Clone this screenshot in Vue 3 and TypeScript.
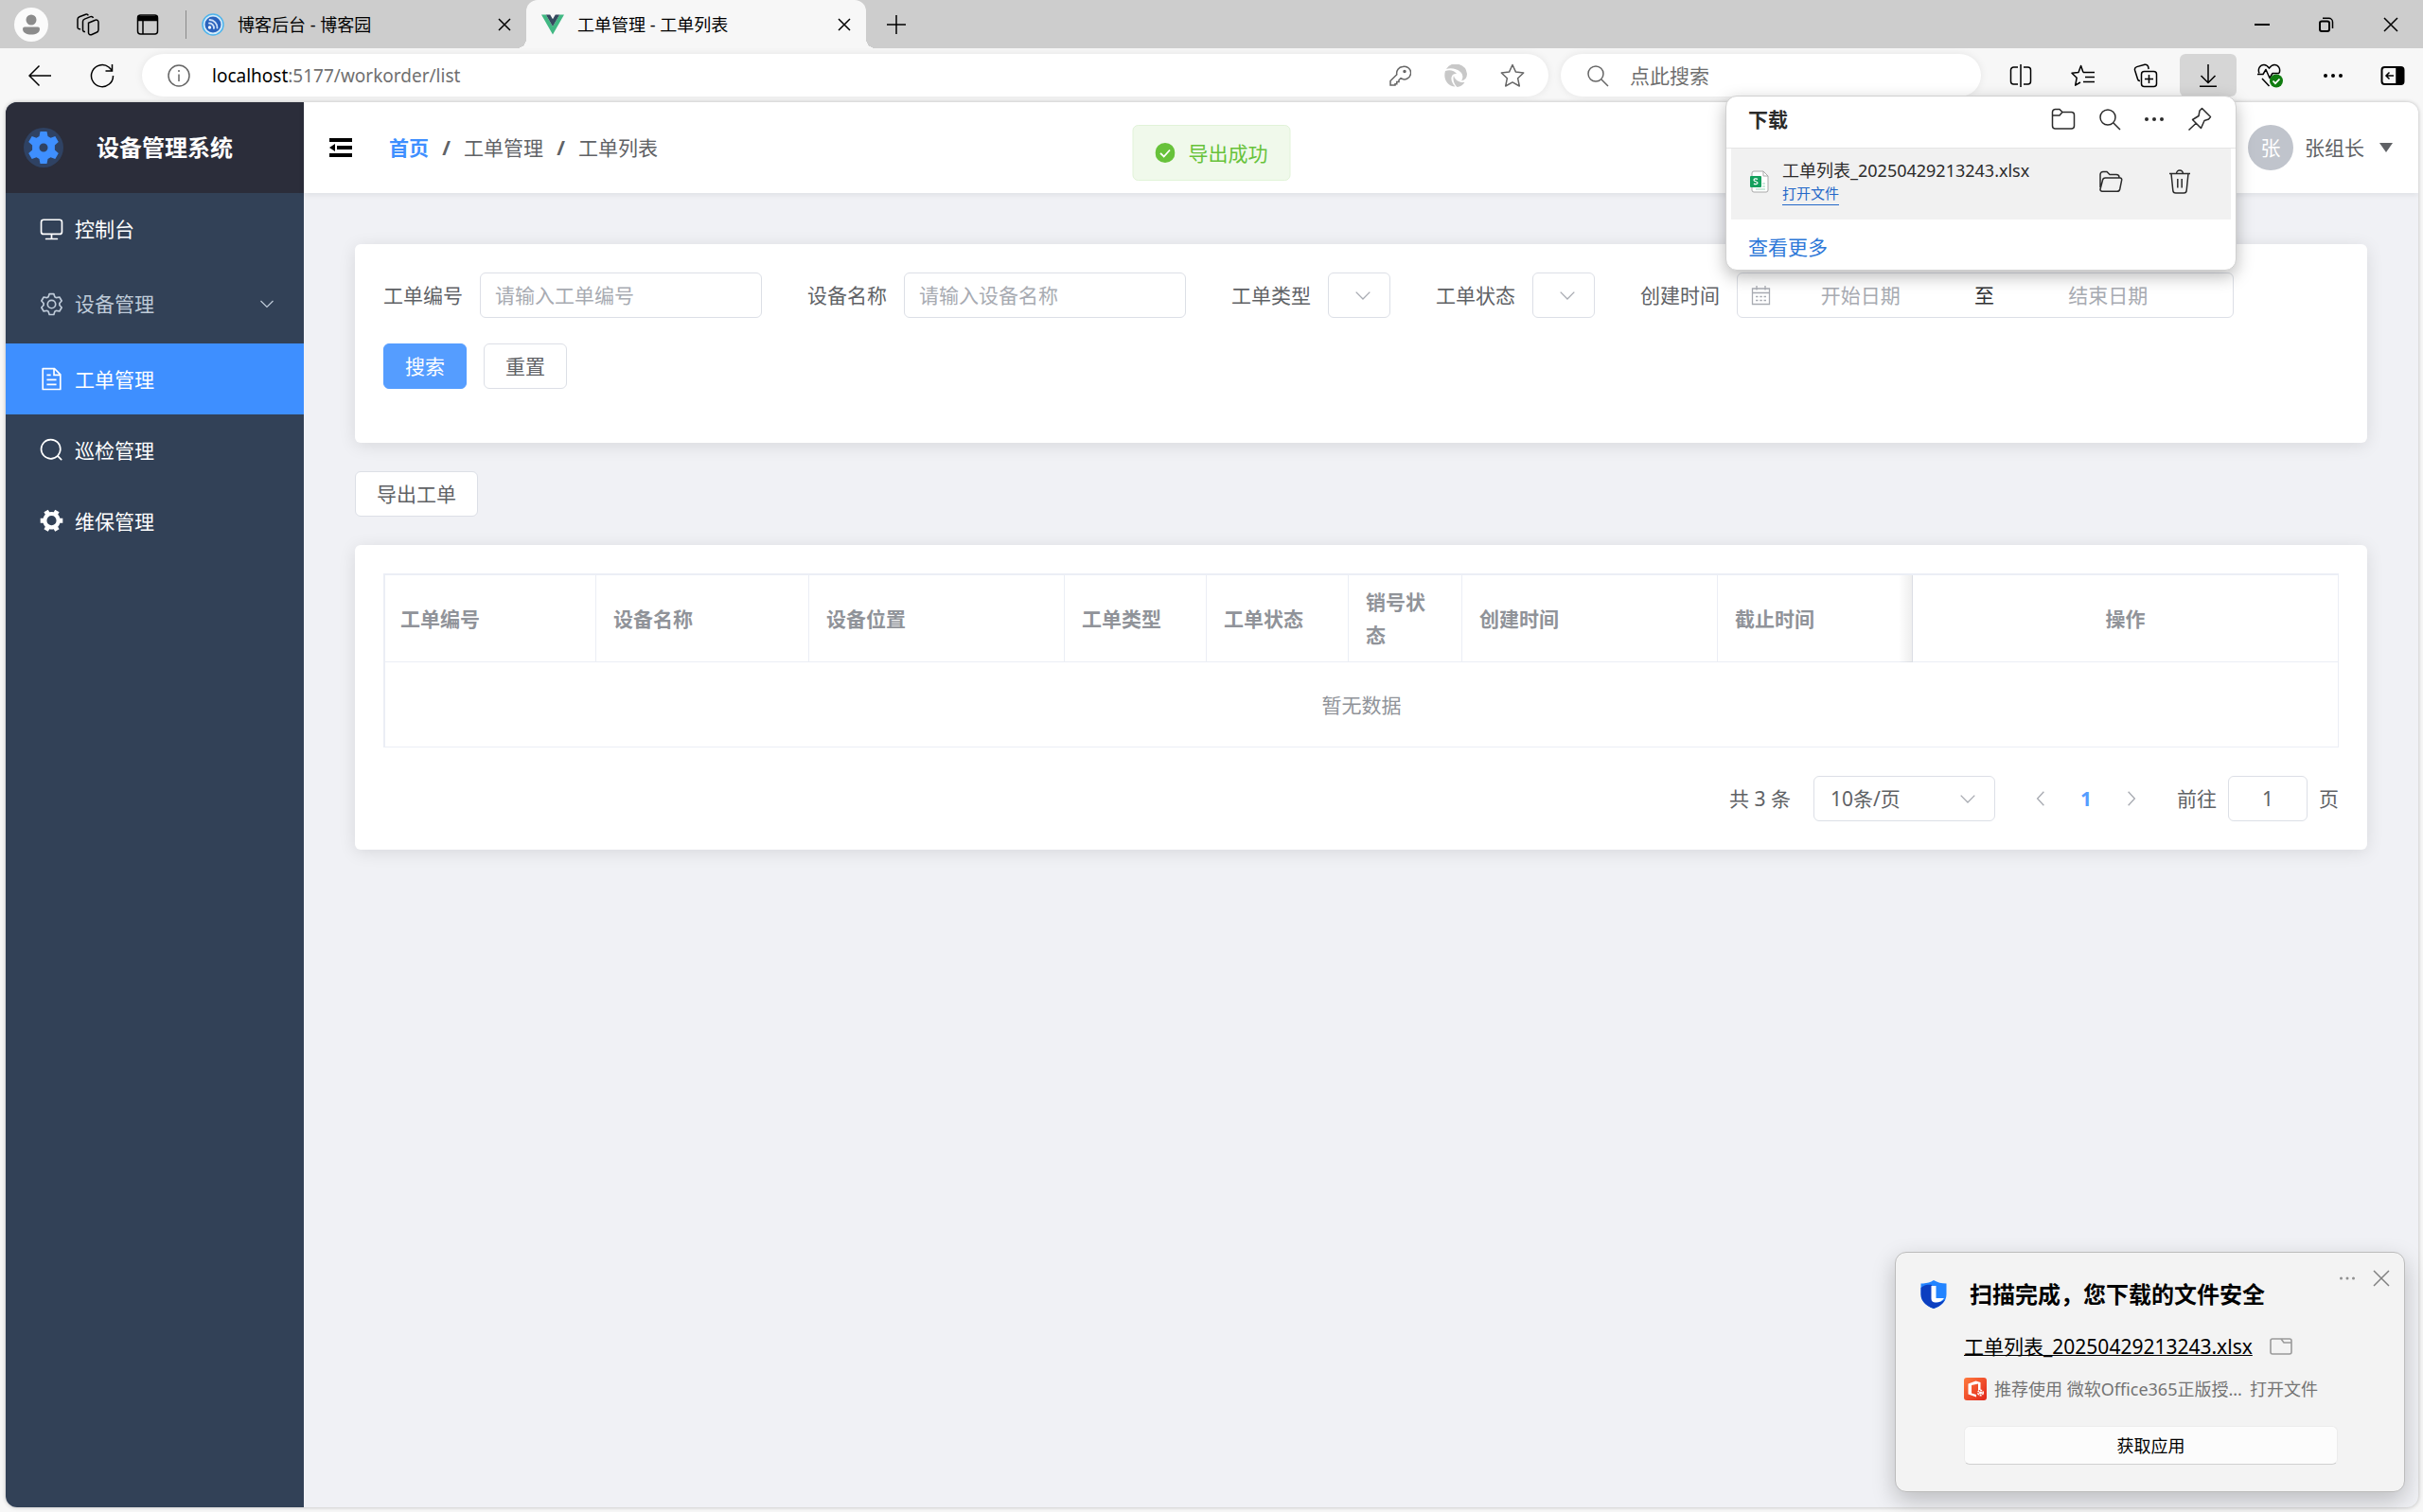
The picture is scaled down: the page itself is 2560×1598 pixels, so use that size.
<script setup lang="ts">
import { ref } from 'vue'

interface MenuItem {
  key: string
  label: string
  viewBox: string
  path: string
  children?: boolean
}

interface Column {
  label: string
  width?: number
  fixed?: boolean
}

const menu: MenuItem[] = [
  {
    key: 'dashboard',
    label: '控制台',
    viewBox: '0 0 1024 1024',
    path: 'M544 768v128h192a32 32 0 1 1 0 64H288a32 32 0 1 1 0-64h192V768H192A128 128 0 0 1 64 640V256a128 128 0 0 1 128-128h640a128 128 0 0 1 128 128v384a128 128 0 0 1-128 128zM192 192a64 64 0 0 0-64 64v384a64 64 0 0 0 64 64h640a64 64 0 0 0 64-64V256a64 64 0 0 0-64-64z',
  },
  {
    key: 'device',
    label: '设备管理',
    viewBox: '0 0 1024 1024',
    path: 'M600.704 64a32 32 0 0 1 30.464 22.208l35.2 109.376c14.784 7.232 28.928 15.36 42.432 24.512l112.384-24.192a32 32 0 0 1 34.432 15.36L944.32 364.8a32 32 0 0 1-4.032 37.504l-77.12 85.12a357.12 357.12 0 0 1 0 49.024l77.12 85.248a32 32 0 0 1 4.032 37.504l-88.704 153.6a32 32 0 0 1-34.432 15.296L708.8 803.904c-13.44 9.088-27.648 17.28-42.368 24.512l-35.264 109.376A32 32 0 0 1 600.704 960H423.296a32 32 0 0 1-30.464-22.208L357.696 828.48a351.616 351.616 0 0 1-42.56-24.64l-112.32 24.256a32 32 0 0 1-34.432-15.36L79.68 659.2a32 32 0 0 1 4.032-37.504l77.12-85.248a357.12 357.12 0 0 1 0-48.896l-77.12-85.248A32 32 0 0 1 79.68 364.8l88.704-153.6a32 32 0 0 1 34.432-15.296l112.32 24.256c13.568-9.152 27.776-17.408 42.56-24.64l35.2-109.312A32 32 0 0 1 423.232 64H600.64zm-23.424 64H446.72l-36.352 113.088-24.512 11.968a294.113 294.113 0 0 0-34.816 20.096l-22.656 15.36-116.224-25.088-65.28 113.152 79.68 88.192-1.92 27.136a293.12 293.12 0 0 0 0 40.192l1.92 27.136-79.808 88.192 65.344 113.152 116.224-25.024 22.656 15.296a294.113 294.113 0 0 0 34.816 20.096l24.512 11.968L446.72 896h130.688l36.48-113.152 24.448-11.904a288.282 288.282 0 0 0 34.752-20.096l22.592-15.296 116.288 25.024 65.28-113.152-79.744-88.192 1.92-27.136a293.12 293.12 0 0 0 0-40.256l-1.92-27.136 79.808-88.128-65.344-113.152-116.288 24.96-22.592-15.232a287.616 287.616 0 0 0-34.752-20.096l-24.448-11.904L577.344 128zM512 320a192 192 0 1 1 0 384 192 192 0 0 1 0-384zm0 64a128 128 0 1 0 0 256 128 128 0 0 0 0-256z',
    children: true,
  },
  {
    key: 'workorder',
    label: '工单管理',
    viewBox: '0 0 1024 1024',
    path: 'M832 384H576V128H192v768h640zm-26.496-64L640 154.496V320zM160 64h480l256 256v608a32 32 0 0 1-32 32H160a32 32 0 0 1-32-32V96a32 32 0 0 1 32-32m160 448h384v64H320zm0-192h160v64H320zm0 384h384v64H320z',
  },
  {
    key: 'inspection',
    label: '巡检管理',
    viewBox: '0 0 1024 1024',
    path: 'M795.904 750.72l124.992 124.928a32 32 0 0 1-45.248 45.248L750.656 795.904a416 416 0 1 1 45.248-45.248zM480 832a352 352 0 1 0 0-704 352 352 0 0 0 0 704z',
  },
  {
    key: 'maintain',
    label: '维保管理',
    viewBox: '0 0 1024 1024',
    path: 'M764.416 254.72a351.68 351.68 0 0 1 86.336 149.184H960v192.064H850.752a351.68 351.68 0 0 1-86.336 149.312l54.72 94.72-166.272 96-54.592-94.72a352.64 352.64 0 0 1-172.48 0L371.136 936l-166.272-96 54.72-94.72a351.68 351.68 0 0 1-86.336-149.312H64v-192h109.248a351.68 351.68 0 0 1 86.336-149.312L204.8 160l166.208-96h.192l54.656 94.592a352.64 352.64 0 0 1 172.48 0L652.8 64h.128L819.2 160l-54.72 94.72zM704 499.968a192 192 0 1 0-384 0 192 192 0 0 0 384 0z',
  },
]
const active = ref('workorder')

const columns: Column[] = [
  { label: '工单编号', width: 225 },
  { label: '设备名称', width: 225 },
  { label: '设备位置', width: 270 },
  { label: '工单类型', width: 150 },
  { label: '工单状态', width: 150 },
  { label: '销号状态', width: 120 },
  { label: '创建时间', width: 270 },
  { label: '截止时间' },
  { label: '操作', width: 450, fixed: true },
]

const orderNo = ref('')
const deviceName = ref('')
const orderType = ref('')
const orderStatus = ref('')
const startDate = ref('')
const endDate = ref('')
const pageSize = ref('10')
const jumpPage = ref('1')
const keyword = ref('')

function resetForm() {
  orderNo.value = ''
  deviceName.value = ''
  orderType.value = ''
  orderStatus.value = ''
  startDate.value = ''
  endDate.value = ''
}
</script>

<template>
  <div class="browser">
    <div class="tabstrip">
      <button class="profile" aria-label="个人资料">
        <svg width="36" height="36" viewBox="0 0 36 36"><circle cx="18" cy="18" r="18" fill="#fbfbfb" /><circle cx="18" cy="13" r="5.5" fill="#8c8c8c" /><path d="M11 20.5h14a2 2 0 0 1 2 2c0 4-4 6-9 6s-9-2-9-6a2 2 0 0 1 2-2z" fill="#8c8c8c" /></svg>
      </button>
      <button class="workspaces" aria-label="工作区">
        <svg class="line" width="26" height="26" viewBox="0 0 26 26"><path d="M13.5 11.2 20.600 8.300a2.400 2.400 0 0 1 3.400 2.200v8a3 3 0 0 1-2 2.800l-5.500 2.400a2.200 2.200 0 0 1-3-2z" /><path d="M10 20.500a2 2 0 0 1-2.500-2V9.800a3 3 0 0 1 1.900-2.700l6.200-2.500a2.300 2.300 0 0 1 2.900 1.400" /><path d="M5 17.500a2 2 0 0 1-3-1.900V7.500a3 3 0 0 1 1.900-2.700l6.600-2.600a2.300 2.300 0 0 1 2.800 1.200" /></svg>
      </button>
      <button class="tab-actions" aria-label="标签页操作">
        <svg class="line" width="24" height="24" viewBox="0 0 24 24"><rect x="1.500" y="2" width="21" height="20" rx="3" /><path d="M2 3.500h20v4H2z" fill="#000" /><path d="M7 8v14" /></svg>
      </button>
      <span class="strip-line"></span>
      <div class="tab">
        <svg width="24" height="24" viewBox="0 0 24 24"><circle cx="12" cy="12" r="11" fill="#d5ecfa" stroke="#4fb4ec" stroke-width="1.500" /><circle cx="12" cy="12" r="8.500" fill="#2a62bd" /><circle cx="8.500" cy="15" r="1.700" fill="#fff" /><path d="M8 10.500a5 5 0 0 1 5 5.500M8.500 7a8 8 0 0 1 8 8.500" fill="none" stroke="#cfe0f7" stroke-width="1.800" stroke-linecap="round" /></svg>
        <span class="tab-title">博客后台 - 博客园</span>
        <button aria-label="关闭标签页"><svg class="line" width="14" height="14" viewBox="0 0 14 14"><path d="m1 1 12 12M13 1 1 13" /></svg></button>
      </div>
      <div class="tab current">
        <svg width="24" height="24" viewBox="0 0 24 24"><path d="M0 1.500h4.800L12 14l7.200-12.500H24L12 22.500z" fill="#41b883" /><path d="M4.800 1.500h4.400L12 6.300l2.800-4.800h4.400L12 14z" fill="#35495e" /></svg>
        <span class="tab-title">工单管理 - 工单列表</span>
        <button aria-label="关闭标签页"><svg class="line" width="14" height="14" viewBox="0 0 14 14"><path d="m1 1 12 12M13 1 1 13" /></svg></button>
      </div>
      <button class="new-tab" aria-label="新建标签页"><svg class="line" width="22" height="22" viewBox="0 0 22 22"><path d="M11 1v20M1 11h20" /></svg></button>
      <div class="window-buttons">
        <button aria-label="最小化"><svg class="line" width="16" height="16" viewBox="0 0 16 16"><path d="M0 8h16" stroke-width="2" /></svg></button>
        <button aria-label="还原"><svg class="line" width="16" height="16" viewBox="0 0 16 16"><rect x="1" y="4.500" width="10" height="10.500" rx="2" stroke-width="2" /><path d="M4 1.300h6.500a4 4 0 0 1 4 4V12" /></svg></button>
        <button aria-label="关闭"><svg class="line" width="16" height="16" viewBox="0 0 16 16"><path d="m1 1 14 14M15 1 1 15" /></svg></button>
      </div>
    </div>

    <div class="toolbar">
      <button class="nav" aria-label="后退"><svg class="line" width="24" height="24" viewBox="0 0 24 24"><path d="M24 12H1M11.500 1.500 1 12l10.500 10.500" /></svg></button>
      <button class="nav" aria-label="刷新"><svg class="line" width="26" height="26" viewBox="0 0 26 26"><path d="M24.500 13A11.500 11.500 0 1 1 20 4l3 3M23.500 1v7h-7" /></svg></button>
      <div class="address">
        <svg class="line grey" width="24" height="24" viewBox="0 0 24 24"><circle cx="12" cy="12" r="11" /><path d="M12 10.500V18M12 6v2" /></svg>
        <span class="url">localhost<span>:5177/workorder/list</span></span>
        <svg class="line grey" width="24" height="24" viewBox="0 0 24 24"><path d="M15 2.500a6.800 6.800 0 1 1-2 12.200L11 16.500v2H8.800v2.200H7V22H2v-4.500l6.800-6.800A6.800 6.800 0 0 1 15 2.500z" /><circle cx="17" cy="7.500" r="1" fill="#666" /></svg>
        <svg width="24" height="24" viewBox="0 0 24 24" fill="#c8c8c8"><path d="M2 5a12 12 0 0 1 22 5c0 4-2 6.500-6 7.500 2-3 2-6.500-1-9.500C13 4.500 7 3.500 2 5z" /><path d="M1 7c5-2 10 0 12 3-3-.5-5 1-5.500 4-.5 3 1 6 4 9.500C3 23-1.500 15 1 7z" /><path d="M10 12c1 4 5 7.500 11.500 7-2 3-4.500 4.500-8 5-3-3-5-8-3.500-12z" /></svg>
        <svg class="line grey" width="26" height="26" viewBox="0 0 26 26"><path d="m13 1.500 3.500 7.600 8.200.9-6.100 5.700 1.700 8.300L13 19.900 5.700 24l1.700-8.300L1.300 10l8.200-.9z" stroke-linejoin="round" /></svg>
      </div>
      <label class="web-search">
        <svg class="line grey" width="24" height="24" viewBox="0 0 24 24"><circle cx="10" cy="10" r="8" /><path d="m16 16 7 7" /></svg>
        <input v-model="keyword" type="text" aria-label="搜索" placeholder="点此搜索" />
      </label>
      <div class="tools">
        <button aria-label="分屏"><svg class="line" width="24" height="24" viewBox="0 0 24 24"><path d="M9 3H4.500A3 3 0 0 0 1.500 6v12a3 3 0 0 0 3 3H9M15 3h4.500a3 3 0 0 1 3 3v12a3 3 0 0 1-3 3H15M12 0v24" /></svg></button>
        <button aria-label="收藏夹"><svg class="line" width="26" height="24" viewBox="0 0 26 24"><path d="M13 8.500 10.600 1.500 8 8.500l-7 .7 5.200 5-1.500 8L10 19M13 8.500h12M15 13.500h10M13 18.500h12" stroke-linejoin="round" /></svg></button>
        <button aria-label="集锦"><svg class="line" width="26" height="26" viewBox="0 0 26 26"><path d="M7 18.500a2.500 2.500 0 0 1-2.500-2L1.600 7.200a3 3 0 0 1 2-3.600L12 1.300a3 3 0 0 1 3.600 2L16.200 6" /><rect x="8.500" y="8.500" width="16" height="16" rx="3" /><path d="M16.500 12v9M12 16.500h9" /></svg></button>
        <button class="pressed" aria-label="下载"><svg class="line" width="24" height="24" viewBox="0 0 24 24"><path d="M12 0v19M4.500 12l7.500 7.500 7.500-7.500M3 23.200h18" /></svg></button>
        <button aria-label="浏览器概要"><svg width="28" height="26" viewBox="0 0 28 26"><g class="line"><path d="M2 10.500C0 5.500 3 1.500 7 1.500c2.500 0 4 1.500 5.500 3.500 1.500-2 3-3.500 5.500-3.500 4 0 7 4 5 9M5 16l7.500 8" /><path d="M0 11.500h6l3-5 4 9 3-5h7" stroke-linejoin="round" /></g><circle cx="20" cy="18.500" r="7" fill="#107c10" /><path d="m16.500 18.500 2.500 2.700 4.500-4.700" fill="none" stroke="#fff" stroke-width="1.800" /></svg></button>
        <button aria-label="更多"><svg width="22" height="6" viewBox="0 0 22 6"><circle cx="3" cy="3" r="2" /><circle cx="11" cy="3" r="2" /><circle cx="19" cy="3" r="2" /></svg></button>
        <button class="narrow" aria-label="侧栏"><svg class="line" width="26" height="22" viewBox="0 0 26 22"><rect x="1.500" y="2" width="23" height="18" rx="3" stroke-width="2" /><path d="M17 2.500h5a2 2 0 0 1 2 2v13a2 2 0 0 1-2 2h-5z" fill="#000" /><path d="M14 11H6M9.500 7.500 6 11l3.500 3.500" /></svg></button>
      </div>
    </div>

    <div class="app">
      <aside class="sidebar">
        <div class="brand">
          <span class="brand-mark"><svg width="32" height="36" viewBox="0 0 32 36"><path fill="#3e8fff" fill-rule="evenodd" d="M12.500 1h7l1 5 3 1.800 4.800-1.700 3.500 6-3.900 3.500v4.800l3.900 3.500-3.500 6-4.800-1.700-3 1.800-1 5h-7l-1-5-3-1.800-4.800 1.700-3.500-6 3.900-3.500v-4.800L.2 12.100l3.500-6 4.800 1.700 3-1.800zM16 13.500a4.500 4.500 0 1 0 0 9 4.500 4.500 0 0 0 0-9z" /></svg></span>
          <h1>设备管理系统</h1>
        </div>
        <nav>
          <a
            v-for="item in menu"
            :key="item.key"
            href="#"
            :class="['menu-item', { active: active === item.key, parent: item.children }]"
            @click.prevent="active = item.key"
          >
            <svg width="27" height="27" :viewBox="item.viewBox" fill="currentColor"><path :d="item.path" /></svg>
            <span>{{ item.label }}</span>
            <svg v-if="item.children" class="arrow" width="16" height="16" viewBox="0 0 16 16"><path d="m1.500 5 6.500 6.500L14.500 5" /></svg>
          </a>
        </nav>
      </aside>

      <div class="content">
        <header class="topbar">
          <button class="fold" aria-label="收起菜单"><svg width="24" height="20" viewBox="0 0 24 20"><path d="M0 0h24v4H0zM8 8h16v4H8zM0 16h24v4H0zM0 10l6-4v8z" /></svg></button>
          <nav class="crumbs">
            <a href="#">首页</a><i>/</i><span>工单管理</span><i>/</i><span>工单列表</span>
          </nav>
          <button class="user">
            <span class="avatar">张</span>
            <span>张组长</span>
            <svg width="14" height="10" viewBox="0 0 14 10"><path d="M0 0h14L7 10z" fill="#606266" /></svg>
          </button>
        </header>

        <main>
          <form class="card filters" @submit.prevent>
            <div class="field">
              <label for="orderNo">工单编号</label>
              <input id="orderNo" v-model="orderNo" class="box text" type="text" placeholder="请输入工单编号" />
            </div>
            <div class="field">
              <label for="deviceName">设备名称</label>
              <input id="deviceName" v-model="deviceName" class="box text" type="text" placeholder="请输入设备名称" />
            </div>
            <div class="field">
              <label for="orderType">工单类型</label>
              <div class="select short">
                <select id="orderType" v-model="orderType" class="box"><option value=""></option></select>
                <svg class="arrow" width="18" height="18" viewBox="0 0 16 16"><path d="m1.500 5 6.500 6.500L14.500 5" /></svg>
              </div>
            </div>
            <div class="field">
              <label for="orderStatus">工单状态</label>
              <div class="select short">
                <select id="orderStatus" v-model="orderStatus" class="box"><option value=""></option></select>
                <svg class="arrow" width="18" height="18" viewBox="0 0 16 16"><path d="m1.500 5 6.500 6.500L14.500 5" /></svg>
              </div>
            </div>
            <div class="field">
              <label for="startDate">创建时间</label>
              <div class="box range">
                <svg width="21" height="21" viewBox="0 0 21 21" fill="none" stroke="#a8abb2" stroke-width="1.300"><path d="M1.500 3h18v16.500h-18zM1.500 7.500h18M6 0v4.500M15 0v4.500" /><path d="M5 11.500h2.500M9.300 11.500h2.500M13.500 11.500H16M5 15.500h2.500M9.300 15.500h2.500M13.500 15.500H16" /></svg>
                <input id="startDate" v-model="startDate" type="text" placeholder="开始日期" />
                <span>至</span>
                <input v-model="endDate" type="text" aria-label="结束日期" placeholder="结束日期" />
              </div>
            </div>
            <div class="actions">
              <button class="btn primary" type="submit">搜索</button>
              <button class="btn" type="button" @click="resetForm">重置</button>
            </div>
          </form>

          <button class="btn export" type="button">导出工单</button>

          <section class="card">
            <table>
              <colgroup>
                <col v-for="col in columns" :key="col.label" :style="col.width ? { width: col.width + 'px' } : undefined" />
              </colgroup>
              <thead>
                <tr>
                  <th v-for="col in columns" :key="col.label" :class="{ fixed: col.fixed }">{{ col.label }}</th>
                </tr>
              </thead>
              <tbody>
                <tr><td :colspan="columns.length">暂无数据</td></tr>
              </tbody>
            </table>
            <div class="pager">
              <span class="total">共 3 条</span>
              <div class="select size">
                <select v-model="pageSize" class="box" aria-label="每页条数"><option value="10">10条/页</option></select>
                <svg class="arrow" width="18" height="18" viewBox="0 0 16 16"><path d="m1.500 5 6.500 6.500L14.500 5" /></svg>
              </div>
              <div class="pages">
                <button type="button" aria-label="上一页"><svg class="arrow" width="18" height="18" viewBox="0 0 16 16"><path d="M11 1.500 5 8l6 6.500" /></svg></button>
                <button type="button" class="on">1</button>
                <button type="button" aria-label="下一页"><svg class="arrow" width="18" height="18" viewBox="0 0 16 16"><path d="m5 1.500 6 6.500-6 6.500" /></svg></button>
              </div>
              <label class="jump">前往<input v-model="jumpPage" class="box" type="text" />页</label>
            </div>
          </section>
        </main>
      </div>
    </div>

    <div class="message" role="status">
      <svg width="21" height="21" viewBox="0 0 21 21"><circle cx="10.500" cy="10.500" r="10.500" fill="#67c23a" /><path d="m5.500 10.800 3.700 3.700 6.300-7" fill="none" stroke="#fff" stroke-width="1.800" /></svg>
      导出成功
    </div>

    <section class="downloads">
      <header>
        <h2>下载</h2>
        <button aria-label="打开下载文件夹"><svg class="line dark" width="26" height="24" viewBox="0 0 26 24"><path d="M1.500 4.500a3 3 0 0 1 3-3H9l3 3h9.500a3 3 0 0 1 3 3V19a3 3 0 0 1-3 3h-17a3 3 0 0 1-3-3zM1.500 8H9l3-3.500" /></svg></button>
        <button aria-label="搜索下载"><svg class="line dark" width="24" height="24" viewBox="0 0 24 24"><circle cx="10" cy="10" r="8" /><path d="m16 16 7 7" /></svg></button>
        <button aria-label="更多选项"><svg width="22" height="6" viewBox="0 0 22 6" fill="#2b2b2b"><circle cx="3" cy="3" r="2" /><circle cx="11" cy="3" r="2" /><circle cx="19" cy="3" r="2" /></svg></button>
        <button aria-label="固定"><svg class="line dark" width="26" height="26" viewBox="0 0 26 26"><path d="m15.500 1.500 9 9-2 2.500-4.500 1.500-3.500 8-9-9L12 9.500l1-5.500zM9.500 17 1.500 24.500" stroke-linejoin="round" /></svg></button>
      </header>
      <div class="file">
        <svg width="20" height="24" viewBox="0 0 20 24"><path d="M4 1h10l5 5v15a2 2 0 0 1-2 2H4a2 2 0 0 1-2-2V3a2 2 0 0 1 2-2z" fill="#fff" stroke="#a9a9a9" /><path d="M14 1v5h5" fill="none" stroke="#a9a9a9" /><path d="M13 14h3M13 17h3M6 20h10" stroke="#cdeadd" stroke-width="2" /><rect y="6" width="12" height="12" rx="1" fill="#12a05c" /><path d="M8 9.500c-1-.9-4-.9-4 .8 0 1.800 4 1.200 4 3 0 1.700-3 1.700-4 .7" fill="none" stroke="#fff" stroke-width="1.200" /></svg>
        <div class="file-text">
          <span>工单列表_20250429213243.xlsx</span>
          <a href="#">打开文件</a>
        </div>
        <button aria-label="在文件夹中显示"><svg class="line dark" width="26" height="24" viewBox="0 0 26 24"><path d="M2 18V4.500a3 3 0 0 1 3-3h4l3 3h7a3 3 0 0 1 3 3V8M7.500 8H23a1.800 1.800 0 0 1 1.700 2.200l-2 9.800a3 3 0 0 1-3 2.300H4a2 2 0 0 1-2-2.300L4.500 10.500A3 3 0 0 1 7.500 8z" /></svg></button>
        <button aria-label="删除文件"><svg class="line dark" width="24" height="26" viewBox="0 0 24 26"><path d="M1 4.500h22M8.500 4.500a3.500 3.500 0 0 1 7 0M3 4.500l1.800 17.700A3 3 0 0 0 7.800 25h8.400a3 3 0 0 0 3-2.800L21 4.500M9.800 10v9.500M14.200 10v9.500" /></svg></button>
      </div>
      <a class="more" href="#">查看更多</a>
    </section>

    <section class="toast">
      <div class="toast-top">
        <svg width="28" height="30" viewBox="0 0 28 30"><path d="M14 0c4 2.500 8 3.500 13.500 3.500V15c0 7.500-6 12.500-13.500 15C6.500 27.500.5 22.500.5 15V3.500C6 3.500 10 2.500 14 0z" fill="#2284ff" /><path d="M.5 8C4 5 8 4.500 12 5v15c0 2 2 3.500 5 3.500 3.500 0 6-1 9-3-2.500 5-7 8-12 9.500C6.500 27.500.5 22.500.5 15z" fill="#0c3fc0" /><path d="M11.500 6h5v13h8.500c-2 3-5 4.500-9 4.500-3 0-4.500-1.500-4.500-4z" fill="#fff" /></svg>
        <h2>扫描完成，您下载的文件安全</h2>
        <div class="toast-buttons">
          <button aria-label="更多"><svg width="18" height="6" viewBox="0 0 18 6" fill="#909090"><circle cx="2.500" cy="3" r="1.500" /><circle cx="9" cy="3" r="1.500" /><circle cx="15.500" cy="3" r="1.500" /></svg></button>
          <button aria-label="关闭"><svg class="line" width="18" height="18" viewBox="0 0 18 18"><path d="m1 1 16 16M17 1 1 17" stroke="#808080" /></svg></button>
        </div>
      </div>
      <div class="toast-file">
        <a href="#">工单列表_20250429213243.xlsx</a>
        <svg width="24" height="18" viewBox="0 0 24 18" fill="none" stroke="#9a9a9a" stroke-width="1.600"><path d="M1 3a2 2 0 0 1 2-2h18a2 2 0 0 1 2 2v12a2 2 0 0 1-2 2H3a2 2 0 0 1-2-2zM12 1l3 4h8" /></svg>
      </div>
      <div class="toast-tip">
        <svg width="24" height="24" viewBox="0 0 24 24"><defs><linearGradient id="tipFill" x1="0" y1="0" x2="1" y2="1"><stop offset="0" stop-color="#ff7a3d" /><stop offset="1" stop-color="#e1251b" /></linearGradient></defs><rect width="24" height="24" rx="3" fill="url(#tipFill)" /><path d="m12.500 3.500 5 1.500v8h-2.500V6.500L8 8v8.500l5 1.500v2.500l-8.500-3V6.500z" fill="#fff" /><circle cx="17.500" cy="16" r="2.700" fill="none" stroke="#fff" stroke-width="1.600" stroke-dasharray="2 1" /><circle cx="17.500" cy="16" r="1.600" fill="#fff" /></svg>
        <span>推荐使用 微软Office365正版授...</span>
        <a href="#">打开文件</a>
      </div>
      <button class="get-app">获取应用</button>
    </section>
  </div>
</template>

<style>
body {
  margin: 0;
  background: #f7f7f7;
}
</style>

<style scoped>
.browser,
.browser * {
  box-sizing: border-box;
}
.browser {
  position: relative;
  display: flex;
  flex-direction: column;
  min-height: 100vh;
  padding-bottom: 5px;
  background: #f7f7f7;
  color: #606266;
  font-family: "Noto Sans", "Noto Sans CJK SC", sans-serif;
  font-size: 21px;
  line-height: 30px;
}
button {
  display: flex;
  align-items: center;
  justify-content: center;
  padding: 0;
  border: 0;
  background: none;
  color: inherit;
  font: inherit;
  cursor: pointer;
}
input,
select {
  min-width: 0;
  padding: 0;
  border: 0;
  outline: 0;
  background: none;
  color: inherit;
  font: inherit;
}
input::placeholder {
  color: #a8abb2;
  opacity: 1;
}
a {
  color: inherit;
  text-decoration: none;
}
h1,
h2 {
  margin: 0;
}
svg {
  flex: none;
  display: block;
}
.line {
  fill: none;
  stroke: #000;
  stroke-width: 1.5;
}
.grey {
  stroke: #666;
}
.dark {
  stroke: #2b2b2b;
}
.arrow {
  fill: none;
  stroke: #a8abb2;
  stroke-width: 1.2;
}

/* tab strip */
.tabstrip {
  display: flex;
  align-items: center;
  height: 51px;
  padding-left: 15px;
  background: #cdcdcd;
  color: #000;
  font-size: 18px;
}
.workspaces {
  margin-left: 29px;
}
.tab-actions {
  margin: 0 28px 0 38px;
}
.strip-line {
  width: 1px;
  height: 30px;
  background: #8a8a8a;
}
.tab {
  position: relative;
  display: flex;
  align-items: center;
  gap: 14px;
  width: 359px;
  height: 51px;
  padding: 0 16px;
}
.tab-title {
  flex: 1;
}
.tab.current {
  border-radius: 12px 12px 0 0;
  background: #f7f7f7;
}
.tab.current::before,
.tab.current::after {
  content: "";
  position: absolute;
  bottom: 0;
  width: 10px;
  height: 10px;
}
.tab.current::before {
  left: -10px;
  background: radial-gradient(circle at 0 0, #cdcdcd 10px, #f7f7f7 10px);
}
.tab.current::after {
  right: -10px;
  background: radial-gradient(circle at 100% 0, #cdcdcd 10px, #f7f7f7 10px);
}
.new-tab {
  margin-left: 21px;
}
.window-buttons {
  display: flex;
  gap: 52px;
  margin-left: auto;
  padding-right: 26px;
}

/* toolbar */
.toolbar {
  display: flex;
  align-items: center;
  height: 57px;
  padding: 0 6px 0 30px;
}
.nav {
  width: 24px;
  margin-right: 42px;
}
.nav + .nav {
  margin-right: 30px;
}
.address,
.web-search {
  display: flex;
  align-items: center;
  height: 45px;
  border-radius: 23px;
  background: #fff;
  box-shadow: 0 0 9px rgba(0, 0, 0, 0.08);
}
.address {
  flex: 1;
  gap: 35px;
  padding: 0 25px 0 27px;
}
.url {
  flex: 1;
  margin-left: -12px;
  color: #000;
  font-size: 19px;
}
.url span {
  color: #707070;
}
.web-search {
  width: 444px;
  margin-left: 13px;
  padding: 0 27px;
  gap: 22px;
}
.web-search input {
  flex: 1;
}
.web-search input::placeholder {
  color: #6f6f6f;
}
.tools {
  display: flex;
  gap: 6px;
  margin-left: 12px;
}
.tools button {
  width: 60px;
  height: 45px;
  border-radius: 6px;
}
.tools .narrow {
  width: 53px;
}
.tools .pressed {
  background: #d6d6d6;
}

/* application shell */
.app {
  flex: 1;
  display: flex;
  margin: 0 5px 0 6px;
  overflow: hidden;
  border-radius: 12px;
  background: #f0f1f5;
  box-shadow: 0 0 4px rgba(0, 0, 0, 0.25);
}
.sidebar {
  width: 315px;
  background: #324157;
  color: #fff;
}
.brand {
  display: flex;
  align-items: center;
  gap: 35px;
  height: 96px;
  padding-left: 19px;
  background: #2b2d3a;
}
.brand-mark {
  display: flex;
  align-items: center;
  justify-content: center;
  width: 42px;
  height: 42px;
  border-radius: 50%;
  background: #2f4263;
}
.brand h1 {
  font-size: 24px;
}
.menu-item {
  display: flex;
  align-items: center;
  gap: 11px;
  height: 75px;
  padding: 0 31px 0 35px;
}
.menu-item.active {
  background: #3e8fff;
}
.menu-item.parent {
  height: 84px;
  color: #bfcbd9;
}
.menu-item .arrow {
  margin-left: auto;
  stroke: #bfcbd9;
}
.content {
  flex: 1;
  min-width: 0;
}
.topbar {
  display: flex;
  align-items: center;
  height: 96px;
  padding: 0 27px;
  background: #fff;
  box-shadow: 0 2px 6px rgba(0, 21, 41, 0.08);
}
.crumbs {
  display: flex;
  margin-left: 39px;
}
.crumbs a {
  color: #3e8fff;
  font-weight: 700;
}
.crumbs i {
  width: 37px;
  font-style: normal;
  font-weight: 700;
  text-align: center;
}
.user {
  gap: 12px;
  margin-left: auto;
}
.user svg {
  margin-left: 4px;
}
.avatar {
  display: flex;
  align-items: center;
  justify-content: center;
  width: 48px;
  height: 48px;
  border-radius: 50%;
  background: #c0c4cc;
  color: #fff;
}
main {
  padding: 54px;
}
.card {
  padding: 30px;
  border-radius: 6px;
  background: #fff;
  box-shadow: 0 3px 18px rgba(0, 0, 0, 0.1);
}

/* filters */
.filters {
  display: flex;
  flex-wrap: wrap;
  gap: 27px 48px;
  padding-bottom: 57px;
}
.field {
  display: flex;
  align-items: center;
  gap: 18px;
}
.box {
  height: 48px;
  border: 1px solid #dcdfe6;
  border-radius: 6px;
  background: #fff;
}
.text {
  width: 298px;
  padding: 0 15px;
}
.select {
  display: grid;
}
.select > * {
  grid-area: 1 / 1;
}
.select select {
  width: 100%;
  padding: 0 17px;
  appearance: none;
}
.select .arrow {
  align-self: center;
  justify-self: end;
  margin-right: 20px;
  pointer-events: none;
}
.short {
  width: 66px;
}
.size {
  width: 192px;
}
.range {
  display: flex;
  align-items: center;
  width: 525px;
  padding: 0 37px 0 14px;
}
.range input {
  flex: 1;
  text-align: center;
}
.range span {
  width: 72px;
  color: #303133;
  text-align: center;
}
.actions {
  display: flex;
  flex-basis: 100%;
  gap: 18px;
}
.btn {
  height: 48px;
  padding: 0 22px;
  border: 1px solid #dcdfe6;
  border-radius: 6px;
  background: #fff;
}
.btn.primary {
  border-color: #559dff;
  background: #559dff;
  color: #fff;
}
.export {
  margin: 30px 0;
}

/* table */
table {
  width: 100%;
  table-layout: fixed;
  border-spacing: 0;
  border-top: 2px solid #ebeef5;
  color: #909399;
}
th {
  position: relative;
  height: 92px;
  padding: 11px 18px 10px;
  border-right: 1px solid #ebeef5;
  border-bottom: 1px solid #ebeef5;
  line-height: 35px;
  text-align: left;
}
th:first-child,
td {
  border-left: 2px solid #ebeef5;
}
th:first-child {
  padding-left: 16px;
}
th.fixed {
  text-align: center;
}
th.fixed::before {
  content: "";
  position: absolute;
  top: 0;
  bottom: -1px;
  left: -15px;
  width: 15px;
  background: linear-gradient(to left, rgba(0, 0, 0, 0.07), transparent);
}
td {
  height: 90px;
  padding: 0;
  border-right: 1px solid #ebeef5;
  border-bottom: 1px solid #ebeef5;
  text-align: center;
}

/* pagination */
.pager {
  display: flex;
  align-items: center;
  justify-content: flex-end;
  gap: 24px;
  margin-top: 30px;
}
.pages {
  display: flex;
}
.pages button {
  width: 48px;
  height: 48px;
}
.pages .on {
  color: #559dff;
  font-weight: 700;
}
.jump {
  display: flex;
  align-items: center;
  gap: 12px;
}
.jump input {
  width: 84px;
  text-align: center;
}

/* success message */
.message {
  position: absolute;
  top: 132px;
  left: 50%;
  display: flex;
  align-items: center;
  gap: 14px;
  height: 59px;
  padding: 0 23px;
  transform: translateX(-50%);
  border: 1px solid #e1f3d8;
  border-radius: 6px;
  background: #f0f9eb;
  color: #67c23a;
}

/* download flyout */
.downloads {
  position: absolute;
  top: 101px;
  right: 197px;
  width: 540px;
  height: 185px;
  border: 1px solid #d0d0d0;
  border-radius: 12px;
  background: #fff;
  box-shadow: 0 6px 18px rgba(0, 0, 0, 0.28);
  color: #2b2b2b;
}
.downloads header {
  display: flex;
  align-items: center;
  gap: 24px;
  height: 55px;
  padding: 0 25px 6px 23px;
  border-bottom: 1px solid #e5e5e5;
}
.downloads h2 {
  flex: 1;
  font-size: 21px;
}
.file {
  display: flex;
  align-items: center;
  height: 75px;
  margin: 0 5px;
  padding: 0 42px 5px 20px;
  background: #f1f1f1;
}
.file-text {
  display: flex;
  flex: 1;
  flex-direction: column;
  align-items: flex-start;
  margin-left: 14px;
  font-size: 18px;
  line-height: 24px;
}
.file-text a {
  border-bottom: 1px solid #2468c8;
  color: #2468c8;
  font-size: 15px;
}
.file button {
  margin-left: 48px;
}
.more {
  display: inline-block;
  margin: 14px 23px;
  color: #2e78d8;
}

/* security toast */
.toast {
  position: absolute;
  right: 19px;
  bottom: 21px;
  width: 539px;
  height: 254px;
  padding: 18px 15px 28px 26px;
  border: 1px solid #bcbcbc;
  border-radius: 12px;
  background: #f3f3f3;
  box-shadow: 0 9px 24px rgba(0, 0, 0, 0.22);
  color: #000;
}
.toast-top {
  display: flex;
  align-items: center;
  gap: 24px;
  height: 52px;
}
.toast h2 {
  flex: 1;
  font-size: 24px;
}
.toast-buttons {
  display: flex;
  align-items: center;
  align-self: flex-start;
  gap: 18px;
}
.toast-file {
  display: flex;
  align-items: center;
  gap: 18px;
  height: 58px;
  padding-left: 46px;
}
.toast-file a {
  text-decoration: underline;
  text-decoration-thickness: 1px;
}
.toast-tip {
  display: flex;
  align-items: center;
  gap: 8px;
  height: 32px;
  padding-left: 46px;
  color: #737373;
  font-size: 18px;
}
.get-app {
  width: 395px;
  height: 41px;
  margin: 23px 0 0 46px;
  border: 1px solid #ececec;
  border-bottom-color: #d0d0d0;
  border-radius: 6px;
  background: #fcfcfc;
  font-size: 18px;
}
</style>
